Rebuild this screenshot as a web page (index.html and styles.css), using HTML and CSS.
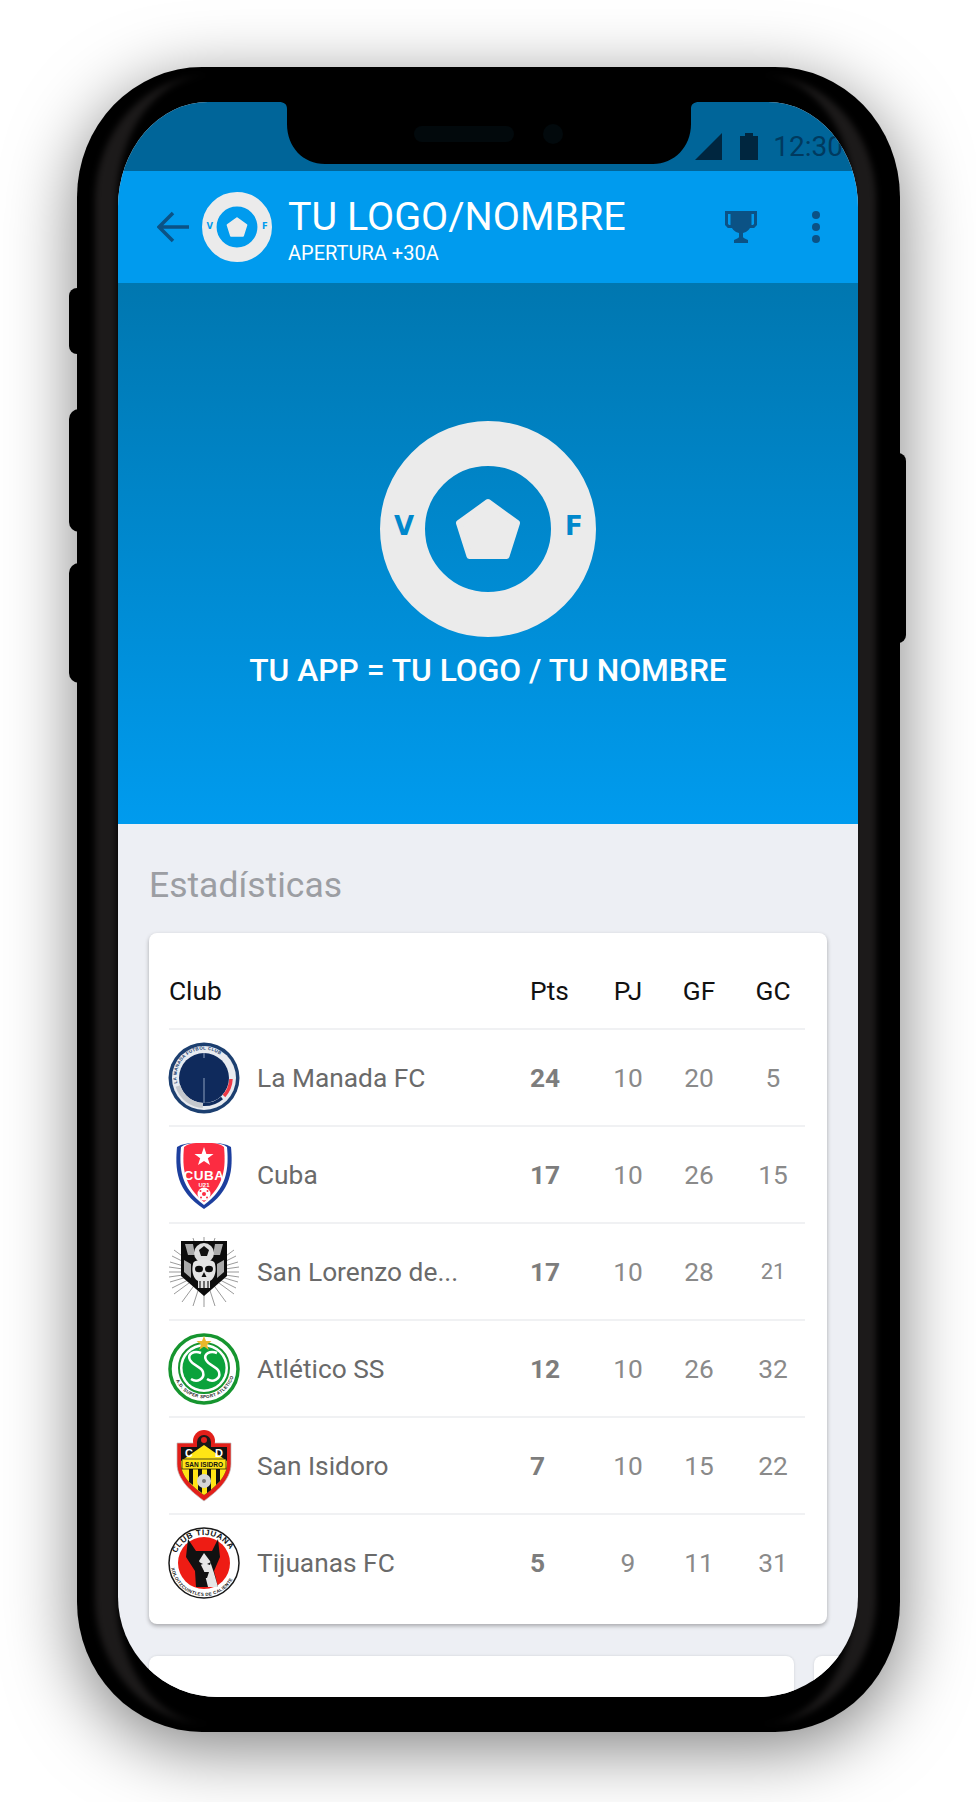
FILE: index.html
```html
<!DOCTYPE html>
<html lang="es">
<head>
<meta charset="utf-8">
<title>Tu Logo / Nombre</title>
<link rel="stylesheet" href="styles.css">
</head>
<body>
<main class="phone">
  <span class="side-btn mute"></span>
  <span class="side-btn vol-up"></span>
  <span class="side-btn vol-down"></span>
  <span class="side-btn power"></span>

  <div class="screen">
    <svg class="notch" viewBox="0 0 420 62" width="420" height="62" aria-hidden="true">
      <path d="M0 0H420C415 0 412 2 412 7V22C412 45 395 62 374 62H46C24 62 8 45 8 22V7C8 2 5 0 0 0Z" fill="#000"/>
      <rect x="135" y="24" width="100" height="16" rx="8" fill="#02090c"/>
      <circle cx="274" cy="32" r="10" fill="#02090c"/>
    </svg>

    <header class="status-bar">
      <svg class="status-signal" viewBox="0 0 27 27" width="27" height="27" aria-hidden="true"><path d="M27 0V27H0Z"/></svg>
      <svg class="status-battery" viewBox="0 0 18 27" width="18" height="27" aria-hidden="true"><path d="M5 3V0H13V3H18V27H0V3Z"/></svg>
      <span class="status-time">12:30</span>
    </header>

    <div class="toolbar">
      <svg class="back" viewBox="0 0 32 32" width="32" height="32" aria-hidden="true"><path d="M32 16H3M16 2L2 16L16 30" fill="none" stroke="currentColor" stroke-width="3.500"/></svg>
      <svg class="toolbar-logo" viewBox="-108 -108 216 216" width="70" height="70" aria-hidden="true">
        <circle r="85.500" class="ring"/>
        <polygon points="0,-27 29,-6 18.500,27 -18.500,27 -29,-6" class="penta"/>
        <text x="-84" y="6" class="vf-letter" text-anchor="middle">V</text>
        <text x="86" y="6" class="vf-letter" text-anchor="middle">F</text>
      </svg>
      <div class="toolbar-titles">
        <h1 class="toolbar-title">TU LOGO/NOMBRE</h1>
        <p class="toolbar-sub">APERTURA +30A</p>
      </div>
      <svg class="trophy" viewBox="0 0 32 32" width="32" height="32" aria-hidden="true">
        <path d="M1.500 1.500H7V15.500H3.500L1.500 13.500ZM25 1.500H30.500V13.500L28.500 15.500H25Z" fill="none" stroke="currentColor" stroke-width="3"/>
        <path d="M6 0H26V13C26 18 22 21 18 22V26C18 27 21 28 23 29V32H9V29C11 28 14 27 14 26V22C10 21 6 18 6 13Z" fill="currentColor"/>
      </svg>
      <svg class="dots" viewBox="0 0 8 32" width="8" height="32" aria-hidden="true"><circle cx="4" cy="4" r="4"/><circle cx="4" cy="16" r="4"/><circle cx="4" cy="28" r="4"/></svg>
    </div>

    <section class="hero">
      <svg class="hero-logo" viewBox="-108 -108 216 216" width="216" height="216" aria-hidden="true">
        <circle r="85.500" class="ring"/>
        <polygon points="0,-27 29,-6 18.500,27 -18.500,27 -29,-6" class="penta"/>
        <text x="-84" y="6" class="vf-letter" text-anchor="middle">V</text>
        <text x="86" y="6" class="vf-letter" text-anchor="middle">F</text>
      </svg>
      <h2 class="hero-text">TU APP = TU LOGO / TU NOMBRE</h2>
    </section>

    <section class="content">
      <h3 class="section-title">Estadísticas</h3>

      <div class="card table">
        <div class="row head">
          <span class="club">Club</span><span class="pts">Pts</span><span class="num">PJ</span><span class="num">GF</span><span class="num last">GC</span>
        </div>

        <div class="row">
          <span class="club">
            <svg class="crest" viewBox="0 0 72 72" aria-hidden="true">
              <circle cx="36" cy="36" r="35.500" fill="#1c3f70"/>
              <circle cx="36" cy="36" r="32" fill="#e8ebf0"/>
              <path id="manada-arc" d="M10 44A27.500 27.500 0 1 1 62 44" fill="none"/>
              <text class="crest-micro" fill="#1c3f70"><textPath href="#manada-arc" startOffset="3">LA MANADA FUTBOL CLUB</textPath></text>
              <circle cx="36" cy="36" r="25" fill="#0f2a5c"/>
              <path d="M10 44A27.500 27.500 0 0 0 35 63.500" fill="none" stroke="#c4c8ce" stroke-width="5"/>
              <path d="M35 62.500A27 27 0 0 0 54 56" fill="none" stroke="#0f2a5c" stroke-width="3"/>
              <path d="M56 54A27 27 0 0 0 63 37" fill="none" stroke="#ef3a46" stroke-width="3.500"/>
              <path d="M36 36V61M36 11V16" stroke="#8ea0bd" stroke-width="1"/>
            </svg>
            <span class="name">La Manada FC</span>
          </span>
          <b class="pts">24</b><span class="num">10</span><span class="num">20</span><span class="num last">5</span>
        </div>

        <div class="row">
          <span class="club">
            <svg class="crest" viewBox="0 0 72 72" aria-hidden="true">
              <path d="M9 8C14 5 20 4 24 4H48C52 4 58 5 63 8C65 30 64 52 36 70C8 52 7 30 9 8Z" fill="#1d3f9e"/>
              <path d="M13 8C17 5 22 4 26 4H46C50 4 55 5 59 8C61 30 59 49 36 66C13 49 11 30 13 8Z" fill="#fff"/>
              <path d="M16 8C20 5 24 4 28 4H44C48 4 52 5 56 8C58 30 56 47 36 63C16 47 14 30 16 8Z" fill="#fc2c41"/>
              <path d="M36 8L38.400 15H45.500L39.800 19.300L42 26L36 22L30 26L32.200 19.300L26.500 15H33.600Z" fill="#fff"/>
              <text x="36" y="41" class="crest-cuba" text-anchor="middle">CUBA</text>
              <text x="36" y="48" class="crest-u21" text-anchor="middle">U21</text>
              <circle cx="36" cy="55" r="6.500" fill="#fff"/>
              <circle cx="36" cy="55" r="2" fill="#fc2c41"/>
              <circle cx="32.500" cy="52" r="1" fill="#fc2c41"/><circle cx="39.500" cy="52" r="1" fill="#fc2c41"/><circle cx="33" cy="58.500" r="1" fill="#fc2c41"/><circle cx="39" cy="58.500" r="1" fill="#fc2c41"/>
            </svg>
            <span class="name">Cuba</span>
          </span>
          <b class="pts">17</b><span class="num">10</span><span class="num">26</span><span class="num last">15</span>
        </div>

        <div class="row">
          <span class="club">
            <svg class="crest" viewBox="0 0 72 72" aria-hidden="true">
              <g stroke="#555" stroke-width=".6">
                <path d="M1 36H71M2 26L70 46M2 46L70 26M6 14L66 58M6 58L66 14M14 6L58 66M14 66L58 6M25 2L47 70M47 2L25 70M36 1V71M1 31L71 41M1 41L71 31M4 20L68 52M4 52L68 20"/>
              </g>
              <path d="M13 5H59V40L36 60L13 40Z" fill="#0c0c0c"/>
              <path d="M17 8H25L27 19H20ZM47 8H55L52 19H45ZM16 24L23 28V42L16 36ZM56 24L49 28V42L56 36Z" fill="#eee" opacity=".7"/>
              <circle cx="36" cy="17" r="10" fill="#ddd"/>
              <path d="M36 10L41 14L39 20H33L31 14Z" fill="#111"/>
              <path d="M25 28C25 22 47 22 47 28C49 36 46 43 42 45V52H30V45C26 43 23 36 25 28Z" fill="#e4e4e4"/>
              <ellipse cx="31" cy="33" rx="4" ry="3.200" fill="#0c0c0c"/><ellipse cx="41" cy="33" rx="4" ry="3.200" fill="#0c0c0c"/>
              <path d="M36 36L38.500 41H33.500Z" fill="#0c0c0c"/>
              <path d="M32 45V52M36 45V52M40 45V52" stroke="#0c0c0c" stroke-width="1.100"/>
            </svg>
            <span class="name">San Lorenzo de...</span>
          </span>
          <b class="pts">17</b><span class="num">10</span><span class="num">28</span><span class="num last small">21</span>
        </div>

        <div class="row">
          <span class="club">
            <svg class="crest" viewBox="0 0 72 72" aria-hidden="true">
              <circle cx="36" cy="36" r="34" fill="#fff" stroke="#16952f" stroke-width="3.500"/>
              <circle cx="36" cy="35" r="25" fill="#fff" stroke="#16952f" stroke-width="2"/>
              <circle cx="36" cy="35" r="21.500" fill="#0ba23b"/>
              <path d="M33 20C26 17 19 21 22 27C25 33 33 33 35 39C37 46 29 50 23 46" fill="none" stroke="#fff" stroke-width="2.500"/>
              <path d="M49 20C42 17 35 21 38 27C41 33 49 33 51 39C53 46 45 50 39 46" fill="none" stroke="#fff" stroke-width="2.500"/>
              <path d="M36 3L38 8H43.500L39 11.500L40.800 17L36 13.500L31.200 17L33 11.500L28.500 8H34Z" fill="#e9b72c"/>
              <path id="atl-arc" d="M6 42A31 31 0 0 0 66 42" fill="none"/>
              <text class="crest-micro dark"><textPath href="#atl-arc" startOffset="6">A.D. SUPER SPORT ATLETICO</textPath></text>
            </svg>
            <span class="name">Atlético SS</span>
          </span>
          <b class="pts">12</b><span class="num">10</span><span class="num">26</span><span class="num last">32</span>
        </div>

        <div class="row">
          <span class="club">
            <svg class="crest" viewBox="0 0 72 72" aria-hidden="true">
              <path d="M9 13H63V34C63 50 48 62 36 71C24 62 9 50 9 34Z" fill="#e21f1a" stroke="#bbb" stroke-width=".7"/>
              <circle cx="36" cy="11" r="11" fill="#e21f1a"/>
              <path d="M29 12A7 7 0 0 1 43 12V17H29Z" fill="#1a1a1a"/>
              <circle cx="36" cy="10" r="3" fill="#e21f1a"/>
              <path d="M13 17H59V34C59 47 46 58 36 65C26 58 13 47 13 34Z" fill="#111"/>
              <path d="M13 31L36 15L59 31V34C59 47 46 58 36 65C26 58 13 47 13 34Z" fill="#ffe415"/>
              <path d="M21 38V52L25 55V38ZM30 38V60L34 63V38ZM39 38V63L43 60V38ZM48 38V55L52 51V38Z" fill="#111"/>
              <text x="21" y="27" class="crest-cd" text-anchor="middle">C</text>
              <text x="51" y="27" class="crest-cd" text-anchor="middle">D</text>
              <rect x="14" y="29" width="44" height="10" fill="#ffe415" stroke="#111" stroke-width=".7"/>
              <text x="36" y="37" class="crest-si" text-anchor="middle">SAN ISIDRO</text>
              <circle cx="36" cy="51" r="7" fill="#d6d6d6"/>
              <circle cx="36" cy="51" r="2" fill="#777"/>
            </svg>
            <span class="name">San Isidoro</span>
          </span>
          <b class="pts">7</b><span class="num">10</span><span class="num">15</span><span class="num last">22</span>
        </div>

        <div class="row">
          <span class="club">
            <svg class="crest" viewBox="0 0 72 72" aria-hidden="true">
              <circle cx="36" cy="36" r="35" fill="#fff" stroke="#1a1a1a" stroke-width="1.500"/>
              <circle cx="36" cy="36" r="26" fill="#ee1c14"/>
              <path id="tij-top" d="M6 38A30 30 0 0 1 66 38" fill="none"/>
              <text class="crest-tij"><textPath href="#tij-top" startOffset="12">CLUB TIJUANA</textPath></text>
              <path id="tij-bot" d="M3 36A33 33 0 0 0 69 36" fill="none"/>
              <text class="crest-micro dark"><textPath href="#tij-bot" startOffset="5">XOLOITZCUINTLES DE CALIENTE</textPath></text>
              <path d="M20 12L28 24H44L50 12L52 30L46 44L50 60H28L27 44L18 30Z" fill="#111"/>
              <path d="M36 44L31 34L36 26L42 34L46 46L50 60H40Z" fill="#e6e6e6"/>
              <path d="M31 35L35 37L32 38ZM43 35L39 37L42 38ZM33 45H41L39 51H35Z" fill="#111"/>
            </svg>
            <span class="name">Tijuanas FC</span>
          </span>
          <b class="pts">5</b><span class="num">9</span><span class="num">11</span><span class="num last">31</span>
        </div>
      </div>

      <div class="card-strip">
        <div class="card next"></div>
        <div class="card next"></div>
      </div>
    </section>
  </div>
</main>
</body>
</html>
```

FILE: styles.css
```css
* { box-sizing: border-box; }

html, body {
  margin: 0;
  height: 1802px;
  background: #fff;
  overflow: hidden;
}

body { padding: 67px 0 0 77px; }

h1, h2, h3, p { margin: 0; }

.phone {
  position: relative;
  width: 823px;
  height: 1665px;
  padding: 35px 42px 35px 41px;
  background: #000;
  border-radius: 125px / 130px;
  box-shadow: 0 16px 70px rgba(0, 0, 0, .5);
  font-family: Roboto, "Liberation Sans", sans-serif;
}

.phone::before {
  content: "";
  position: absolute;
  inset: 8px 24px 8px 18px;
  border-left: 22px solid #1c1a1a;
  border-right: 22px solid #1c1a1a;
  border-radius: 115px / 125px;
  filter: blur(3px);
}

.side-btn {
  position: absolute;
  left: -8px;
  width: 10px;
  background: #000;
  border-radius: 8px 0 0 8px;
}
.mute { top: 221px; height: 66px; }
.vol-up { top: 342px; height: 123px; border-radius: 10px 0 0 10px; }
.vol-down { top: 496px; height: 120px; border-radius: 10px 0 0 10px; }
.power {
  left: auto;
  right: -6px;
  top: 386px;
  width: 8px;
  height: 190px;
  border-radius: 0 10px 10px 0;
}

.screen {
  position: relative;
  display: flex;
  flex-direction: column;
  width: 740px;
  height: 1595px;
  overflow: hidden;
  background: #edeff4;
  border-radius: 90px 90px 100px 100px / 105px 105px 100px 100px;
}

.notch {
  position: absolute;
  top: 0;
  left: 161px;
  z-index: 2;
}

.status-bar {
  display: flex;
  align-items: flex-end;
  justify-content: flex-end;
  flex: 0 0 69px;
  padding: 0 15px 11px 0;
  background: #006599;
}
.status-signal { fill: #00263f; margin-right: 18px; }
.status-battery { fill: #00263f; margin-right: 15px; }
.status-time {
  color: #003a5f;
  font-size: 28px;
  line-height: 27px;
}

.toolbar {
  display: flex;
  align-items: center;
  flex: 0 0 112px;
  padding-left: 39px;
  background: #009bee;
  color: #0b5285;
}
.back { margin-right: 13px; }
.toolbar-logo { color: #009bee; margin-right: 16px; }
.toolbar-titles {
  display: flex;
  flex-direction: column;
  width: 437px;
  padding-top: 5px;
  color: #fff;
}
.toolbar-title {
  font-size: 39.500px;
  font-weight: 400;
  line-height: 44px;
}
.toolbar-sub {
  margin-top: 2px;
  font-size: 20px;
  line-height: 24px;
}
.trophy { margin-right: 55px; }
.dots { fill: currentColor; }

.hero {
  display: flex;
  flex-direction: column;
  align-items: center;
  flex: 0 0 541px;
  padding-top: 138px;
  background: linear-gradient(#0077b0, #009bee);
  color: #0088cc;
}
.hero-logo { margin-bottom: 16px; }
.hero-text {
  color: #fff;
  font-size: 31.750px;
  font-weight: 500;
  line-height: 36px;
}
.ring { fill: none; stroke: #ebebeb; stroke-width: 45px; }
.penta { fill: #ebebeb; stroke: #ebebeb; stroke-width: 6px; stroke-linejoin: round; }
.vf-letter {
  fill: currentColor;
  font-family: "DejaVu Sans", sans-serif;
  font-size: 26px;
  font-weight: 700;
}

.content { padding: 0 31px; }

.section-title {
  height: 109px;
  padding: 40px 0 0;
  color: #9c9ea3;
  font-size: 35.500px;
  font-weight: 400;
  line-height: 42px;
}

.card {
  background: #fff;
  border-radius: 8px;
  box-shadow: 0 2px 4px rgba(0, 0, 0, .3);
}

.table {
  height: 691px;
  padding: 0 22px 0 20px;
}

.row {
  display: grid;
  grid-template-columns: 361px 62px 72px 70px 71px;
  align-items: center;
  height: 97px;
  border-top: 2px solid #f0f1f3;
  color: #8a8a8a;
  font-size: 26.300px;
}

.row.head {
  height: 95px;
  padding-top: 20px;
  border-top: 0;
  color: #111;
}

.club {
  display: flex;
  align-items: center;
  gap: 18px;
}
.crest {
  flex: 0 0 72px;
  width: 72px;
  height: 72px;
  margin: 0 -1px;
}
.name { color: #6a6a6a; }
.pts { font-weight: 400; }
b.pts { font-weight: 700; color: #7d7d7d; }
.num { text-align: center; }
.last { padding-left: 7px; }
.small { font-size: 22px; }

.crest-micro { font: 700 4.500px "Liberation Sans", sans-serif; letter-spacing: .3px; }
.dark { fill: #222; }
.crest-cuba { fill: #fff; font: 700 13.500px "Liberation Sans", sans-serif; letter-spacing: .5px; }
.crest-u21 { fill: #fff; font: 700 6px "Liberation Sans", sans-serif; }
.crest-cd { fill: #fff; font: 700 11px "Liberation Sans", sans-serif; }
.crest-si { fill: #111; font: 700 6.500px "Liberation Sans", sans-serif; }
.crest-tij { fill: #111; font: 700 8px "Liberation Sans", sans-serif; letter-spacing: .6px; }

.card-strip {
  display: flex;
  gap: 20px;
  margin-top: 32px;
}
.next {
  flex: 0 0 645px;
  height: 200px;
  box-shadow: 0 0 3px rgba(0, 0, 0, .12);
}
```
